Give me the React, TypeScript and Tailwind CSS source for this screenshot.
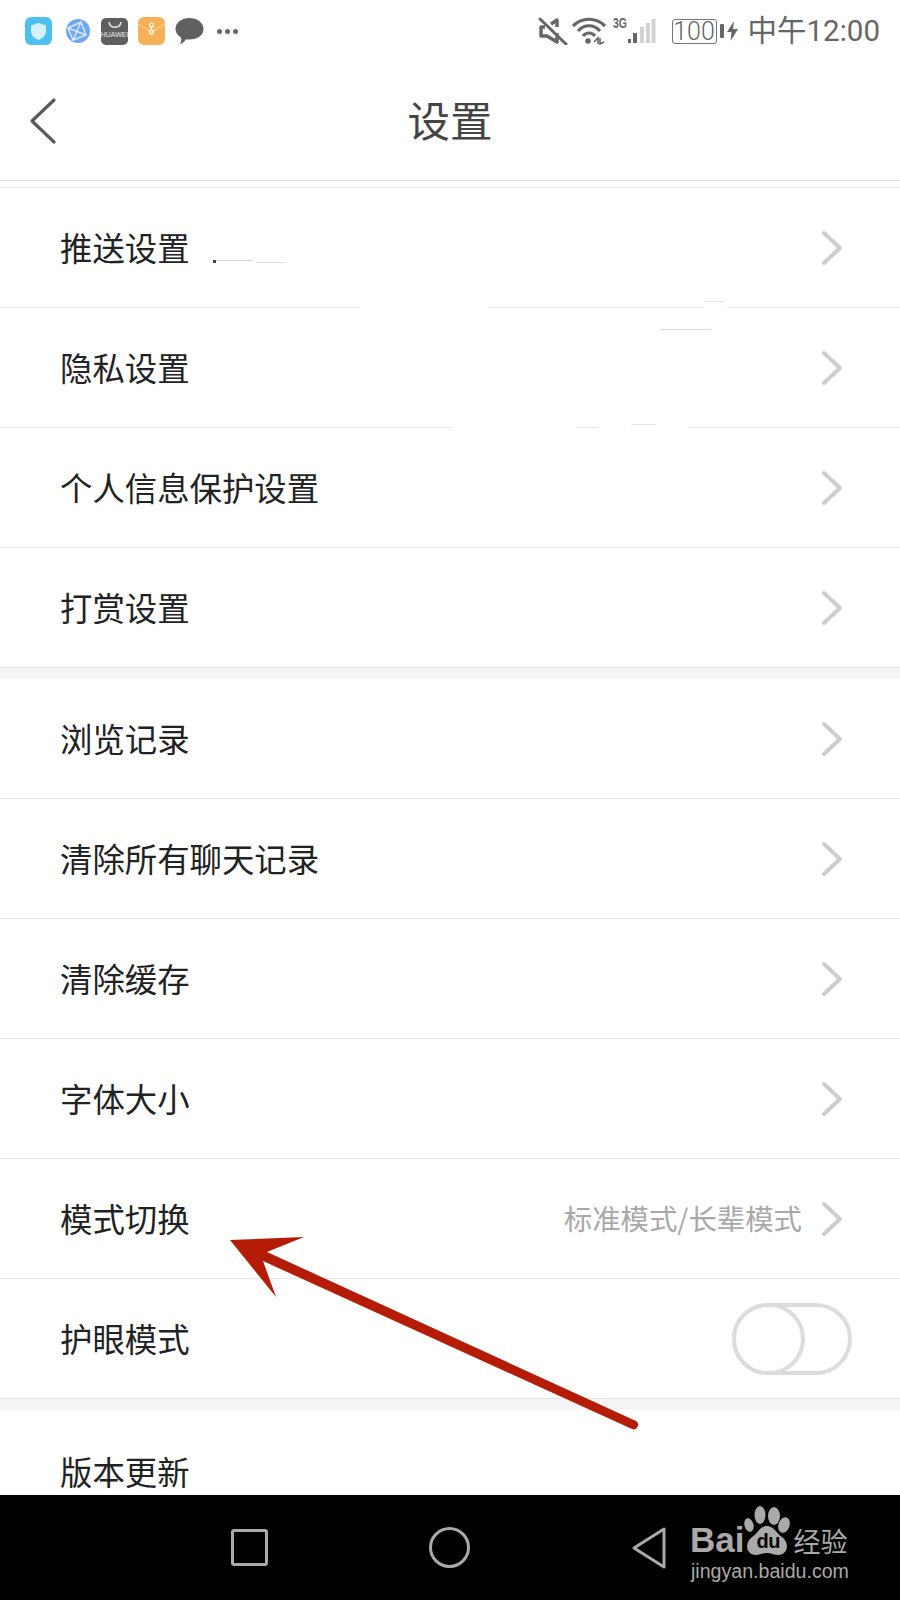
import type { ReactNode } from "react";

const FONT = "font-['Noto_Sans_CJK_SC','Liberation_Sans',sans-serif]";

function Chevron() {
  return (
    <svg width="24" height="36" viewBox="0 0 24 36" className="shrink-0">
      <path d="M4 3 L20 18 L4 33" fill="none" stroke="#cdcdcd" strokeWidth="4" strokeLinecap="round" strokeLinejoin="round" />
    </svg>
  );
}

function Row({ label, right }: { label: string; right?: ReactNode }) {
  return (
    <div className="h-[120px] shrink-0 flex items-center justify-between pl-[60px] bg-white border-b border-[#e6e6e6]">
      <span className="text-[32.4px] leading-none text-[#222]">{label}</span>
      {right ?? (
        <div className="pr-[56px]">
          <Chevron />
        </div>
      )}
    </div>
  );
}

function StatusBar() {
  return (
    <div className="h-[68px] shrink-0 flex justify-between items-start pt-[17px] pl-[25px] pr-[20px]">
      <div className="flex items-center gap-[11px]">
        {/* shield */}
        <svg width="27" height="28" viewBox="0 0 27 28">
          <rect width="27" height="28" rx="6" fill="#4cc1ee" />
          <path d="M13.5 6 L21 8.5 V14 C21 18.5 17.5 21.5 13.5 23 C9.5 21.5 6 18.5 6 14 V8.5 Z" fill="#d6f1fb" />
        </svg>
        {/* globe */}
        <svg width="26" height="26" viewBox="0 0 26 26" className="ml-[2px]">
          <circle cx="13" cy="13" r="12" fill="#6ea8f3" />
          <path d="M3 10 L16 4 L21 17 L8 22 Z M3 10 L21 17 M16 4 L8 22" fill="none" stroke="#dbe9fc" strokeWidth="1.4" />
        </svg>
        {/* huawei store */}
        <div className="w-[27px] h-[27px] -ml-[1px] rounded-[5px] bg-[#5f5f5f] flex flex-col items-center overflow-hidden">
          <svg width="16" height="9" viewBox="0 0 16 9" className="mt-[3px]">
            <path d="M2 1 C3 8 13 8 14 1" fill="none" stroke="#eee" strokeWidth="1.5" />
          </svg>
          <span className="text-[7px] leading-[8px] mt-[1px] text-[#eee] whitespace-nowrap font-['Liberation_Sans',sans-serif]">HUAWEI</span>
        </div>
        {/* envelope */}
        <svg width="27" height="28" viewBox="0 0 27 28" className="-ml-[1px]">
          <rect width="27" height="28" rx="6" fill="#f6b158" />
          <path d="M0 7 L13.5 15 L27 7" fill="none" stroke="#fbd08f" strokeWidth="1.2" />
          <circle cx="13.5" cy="8" r="2" fill="none" stroke="#fff" strokeWidth="1.2" />
          <circle cx="13.5" cy="15" r="2" fill="none" stroke="#fff" strokeWidth="1.2" />
          <path d="M13.5 10 V13" stroke="#fff" strokeWidth="1.2" />
        </svg>
        {/* bubble */}
        <svg width="29" height="28" viewBox="0 0 29 28" className="-ml-[1px]">
          <path d="M14.5 1 C22 1 28.5 5.5 28.5 12 C28.5 18.5 22 22.5 14.5 22.5 C13 22.5 12 22.4 11 22.2 C9.5 24.5 7 26.5 5 27 C6 25 6.5 22.5 6 20.5 C2.5 18.5 0.5 15.5 0.5 12 C0.5 5.5 7 1 14.5 1 Z" fill="#606060" />
        </svg>
        {/* more */}
        <div className="flex gap-[3px] ml-[2px]">
          <div className="w-[5px] h-[5px] rounded-full bg-[#666]" />
          <div className="w-[5px] h-[5px] rounded-full bg-[#666]" />
          <div className="w-[5px] h-[5px] rounded-full bg-[#666]" />
        </div>
      </div>
      <div className="flex items-center text-[#666]">
        {/* muted */}
        <svg width="30" height="28" viewBox="0 0 30 28">
          <path d="M7 10 H3 V19 H9 L19 25 V16 M13 7 L19 3 V10" fill="none" stroke="#666" strokeWidth="3.5" strokeLinejoin="round" />
          <path d="M2 2 L28 27" stroke="#666" strokeWidth="3" strokeLinecap="round" />
        </svg>
        {/* wifi */}
        <svg width="34" height="28" viewBox="0 0 34 28" className="ml-[4px]">
          <path d="M1 9 C10 0 24 0 33 9 M6 14 C12 7 22 7 28 14 M11 19 C14 15 20 15 23 19" fill="none" stroke="#666" strokeWidth="3.2" />
          <circle cx="16" cy="24" r="2.8" fill="#666" />
          <path d="M22 25 L26 21 V27 M28 21 V27 L32 25" fill="none" stroke="#666" strokeWidth="1.6" />
        </svg>
        {/* signal */}
        <div className="relative w-[46px] h-[28px] ml-[7px]">
          <span className="absolute left-0 -top-[1px] text-[14px] leading-[14px] font-bold scale-x-75 origin-left font-['Liberation_Sans',sans-serif]">3G</span>
          <svg width="32" height="28" viewBox="0 0 32 28" className="absolute left-[14px] top-0">
            <rect x="1" y="22" width="3" height="4" fill="#666" />
            <rect x="6" y="16" width="4" height="10" fill="#666" />
            <rect x="13" y="10" width="4" height="16" fill="#d2d2d2" />
            <rect x="19" y="6" width="4" height="20" fill="#d2d2d2" />
            <rect x="24.5" y="2" width="4" height="24" fill="#d2d2d2" />
          </svg>
        </div>
        {/* battery */}
        <div className="ml-[13px] w-[45px] h-[25px] mt-[1px] border border-[#777] rounded-[3px] flex items-center justify-center text-[25px] leading-none font-['Roboto',sans-serif] font-light">
          100
        </div>
        <div className="ml-[3px] w-[4px] h-[14px] bg-[#666] rounded-[1px]" />
        <svg width="11" height="20" viewBox="0 0 11 20" className="ml-[3px]">
          <path d="M7 0 L0 11 H4.5 L3.5 20 L11 8 H6 Z" fill="#666" />
        </svg>
        <span className="ml-[10px] -mt-[1px] text-[29.5px] leading-[28px] whitespace-nowrap font-['Roboto','Noto_Sans_CJK_SC',sans-serif]">中午12:00</span>
      </div>
    </div>
  );
}

function Toggle() {
  return (
    <div className="pr-[48px]">
      <div className="relative w-[120px] h-[72px] rounded-full border-[4px] border-[#dcdcdc] bg-white">
        <div className="absolute -left-[4px] -top-[4px] w-[73px] h-[72px] rounded-full border-[4px] border-[#dcdcdc] bg-white" />
      </div>
    </div>
  );
}

function BaiduMark() {
  return (
    <div className="flex flex-col items-start text-[#aaa] font-['Liberation_Sans',sans-serif]">
      <div className="flex items-end h-[52px]">
        <span className="text-[35px] leading-[34px] font-bold">Bai</span>
        <div className="relative w-[46px] h-[52px]">
          <svg width="46" height="52" viewBox="0 0 46 52" className="absolute left-0 top-0">
            <ellipse cx="5" cy="20" rx="4.5" ry="7" fill="#aaa" transform="rotate(-15 5 20)" />
            <ellipse cx="16" cy="10" rx="5.5" ry="9" fill="#aaa" />
            <ellipse cx="30" cy="11" rx="6" ry="9" fill="#aaa" />
            <ellipse cx="40" cy="20" rx="5.5" ry="8" fill="#aaa" transform="rotate(20 40 20)" />
            <path d="M23 21 C30 21 32 28 38 32 C46 38 44 50 34 50 C30 50 27 48 23 48 C19 48 16 50 12 50 C2 50 0 38 8 32 C14 28 16 21 23 21 Z" fill="#aaa" />
          </svg>
          <span className="absolute left-[12px] top-[26px] text-[20px] leading-[20px] font-bold text-black tracking-[-0.5px]">du</span>
        </div>
        <span className={`${FONT} text-[27px] leading-[30px] ml-[3px] mb-[1px] whitespace-nowrap`}>经验</span>
      </div>
      <span className="text-[19.6px] leading-[24px] mt-[2px] ml-[1px] whitespace-nowrap">jingyan.baidu.com</span>
    </div>
  );
}

function NavBar() {
  return (
    <div className="h-[105px] shrink-0 bg-black relative flex items-start pt-[34px]">
      <div className="ml-[231px] w-[37px] h-[37px] rounded-[3px] border-[3px] border-[#aaa]" />
      <div className="ml-[161px] w-[41px] h-[41px] -mt-[2px] rounded-full border-[3px] border-[#aaa]" />
      <svg width="36" height="42" viewBox="0 0 36 42" className="ml-[161px] -mt-[2px]">
        <path d="M33 2 V40 L3 21 Z" fill="none" stroke="#aaa" strokeWidth="3" strokeLinejoin="round" />
      </svg>
      <div className="absolute left-[690px] top-[10px]">
        <BaiduMark />
      </div>
    </div>
  );
}

export default function App() {
  return (
    <div className={`${FONT} relative w-[900px] h-[1600px] overflow-hidden bg-white flex flex-col`}>
      <StatusBar />

      {/* header */}
      <div className="h-[113px] shrink-0 grid grid-cols-[1fr_auto_1fr] items-center border-b border-[#dedede]">
        <svg width="30" height="48" viewBox="0 0 30 48" className="ml-[28px] -mt-[6px]">
          <path d="M26 3 L4 24 L26 45" fill="none" stroke="#5a5a5a" strokeWidth="3.2" strokeLinecap="round" strokeLinejoin="round" />
        </svg>
        <span className="text-[42.5px] leading-none text-[#444] -mt-[10px]">设置</span>
        <div />
      </div>

      <div className="flex-1 min-h-0 overflow-hidden flex flex-col pt-[6px]">
        <div className="border-t border-[#e6e6e6]">
          <Row label="推送设置" />
          <Row label="隐私设置" />
          <Row label="个人信息保护设置" />
          <Row label="打赏设置" />
        </div>
        <div className="h-[11px] shrink-0 bg-[#f4f4f4]" />
        <Row label="浏览记录" />
        <Row label="清除所有聊天记录" />
        <Row label="清除缓存" />
        <Row label="字体大小" />
        <Row
          label="模式切换"
          right={
            <div className="flex items-center gap-[18px] pr-[56px]">
              <span className="text-[28.4px] leading-none text-[#a8a8a8]">标准模式/长辈模式</span>
              <Chevron />
            </div>
          }
        />
        <Row label="护眼模式" right={<Toggle />} />
        <div className="h-[11px] shrink-0 bg-[#f4f4f4]" />
        <div className="shrink-0 bg-white pl-[60px] pt-[45px]">
          <span className="text-[32.4px] leading-none text-[#222]">版本更新</span>
        </div>
      </div>

      <NavBar />

      {/* erased patches left on the screenshot */}
      <div className="absolute left-[360px] top-[305px] w-[128px] h-[4px] bg-white" />
      <div className="absolute left-[704px] top-[305px] w-[23px] h-[4px] bg-white" />
      <div className="absolute left-[704px] top-[301px] w-[21px] h-[1px] bg-[#e6e6e6]" />
      <div className="absolute left-[660px] top-[329px] w-[51px] h-[1px] bg-[#dcdcdc]" />
      <div className="absolute left-[452px] top-[425px] w-[237px] h-[4px] bg-white" />
      <div className="absolute left-[577px] top-[427px] w-[20px] h-[1px] bg-[#e6e6e6]" />
      <div className="absolute left-[631px] top-[424px] w-[25px] h-[1px] bg-[#e6e6e6]" />
      <div className="absolute left-[214px] top-[260px] w-[40px] h-[1px] bg-[#d8d8d8]" />
      <div className="absolute left-[213px] top-[260px] w-[3px] h-[3px] bg-[#444]" />
      <div className="absolute left-[256px] top-[262px] w-[31px] h-[1px] bg-[#e0e0e0]" />

      {/* red annotation arrow */}
      <svg width="900" height="1600" viewBox="0 0 900 1600" className="absolute left-0 top-0 pointer-events-none">
        <path d="M230 1240 L304 1237 L267 1252 L636 1421 A4.5 4.5 0 0 1 632 1429 L263 1261 L276 1297 Z" fill="#b51c08" />
      </svg>
    </div>
  );
}
